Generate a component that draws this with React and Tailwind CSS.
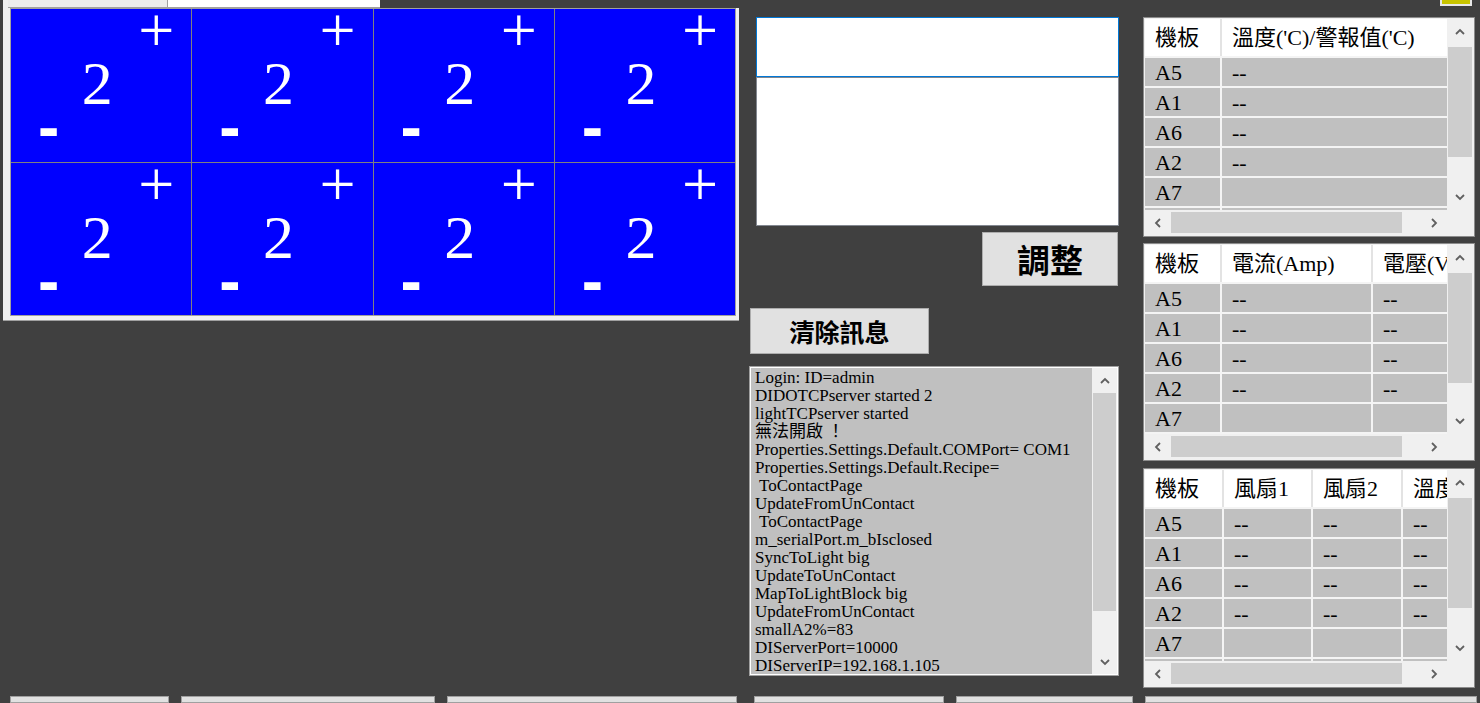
const logLines = [
  'Login: ID=admin',
  'DIDOTCPserver started 2',
  'lightTCPserver started',
  '無法開啟 ！',
  'Properties.Settings.Default.COMPort= COM1',
  'Properties.Settings.Default.Recipe=',
  ' ToContactPage',
  'UpdateFromUnContact',
  ' ToContactPage',
  'm_serialPort.m_bIsclosed',
  'SyncToLight big',
  'UpdateToUnContact',
  'MapToLightBlock big',
  'UpdateFromUnContact',
  'smallA2%=83',
  'DIServerPort=10000',
  'DIServerIP=192.168.1.105',
]

const grids = [
  {
    h: 'h-[220px]',
    cols: [75, 240],
    headers: ['機板', "溫度('C)/警報值('C)"],
    rows: [['A5', '--'], ['A1', '--'], ['A6', '--'], ['A2', '--'], ['A7', ''], ['', '']],
  },
  {
    h: 'h-[218px]',
    cols: [75, 149, 120],
    headers: ['機板', '電流(Amp)', '電壓(V)'],
    rows: [['A5', '--', '--'], ['A1', '--', '--'], ['A6', '--', '--'], ['A2', '--', '--'], ['A7', '', ''], ['', '', '']],
  },
  {
    h: 'h-[220px]',
    cols: [77, 87, 88, 80],
    headers: ['機板', '風扇1', '風扇2', '溫度'],
    rows: [['A5', '--', '--', '--'], ['A1', '--', '--', '--'], ['A6', '--', '--', '--'], ['A2', '--', '--', '--'], ['A7', '', '', ''], ['', '', '', '']],
  },
]

function Arrow({ dir }) {
  const pts = {
    up: '1,6 5,2 9,6',
    down: '1,2 5,6 9,2',
    left: '6,1 2,5 6,9',
    right: '2,1 6,5 2,9',
  }[dir]
  const vert = dir === 'up' || dir === 'down'
  return (
    <svg width={vert ? 10 : 8} height={vert ? 8 : 10} viewBox={vert ? '0 0 10 8' : '0 0 8 10'}>
      <polyline points={pts} fill="none" stroke="#606060" strokeWidth="1.8" />
    </svg>
  )
}

function Cell() {
  return (
    <div className="bg-[#0000ff] text-white flex flex-col font-['Liberation_Serif',serif]">
      <div className="h-[44px] flex justify-end pr-[17px] text-[64px] leading-[44px]">+</div>
      <div className="h-[61px] flex justify-center pr-[8px] text-[62px] leading-[61px]">2</div>
      <div className="mt-[3px] pl-[27px] text-[64px] leading-[20px] font-bold font-['Liberation_Sans',sans-serif]">-</div>
    </div>
  )
}

function DataGrid({ grid }) {
  return (
    <div className={`${grid.h} w-[332px] border border-[#8c8c8c] bg-[#f0f0f0] p-px flex flex-col`}>
      <div className="flex flex-1 min-h-0">
        <div className="w-[302px] overflow-hidden bg-[#f4f4f4] flex flex-col gap-[2px] text-[22px] text-black font-['Liberation_Serif','Noto_Sans_CJK_TC',serif]">
          <div className="flex gap-[2px] bg-[#e3e3e3] shrink-0">
            {grid.headers.map((t, i) => (
              <div
                key={i}
                style={{ width: grid.cols[i] }}
                className="h-[37px] shrink-0 bg-white pl-[10px] flex items-center whitespace-nowrap overflow-hidden"
              >
                {t}
              </div>
            ))}
          </div>
          {grid.rows.map((r, ri) => (
            <div key={ri} className="flex gap-[2px] shrink-0">
              {r.map((t, i) => (
                <div
                  key={i}
                  style={{ width: grid.cols[i] }}
                  className="h-[28px] shrink-0 bg-[#c0c0c0] pl-[10px] flex items-center whitespace-nowrap"
                >
                  {t}
                </div>
              ))}
            </div>
          ))}
        </div>
        <div className="w-[26px] flex flex-col items-center">
          <div className="h-[26px] w-full flex items-center justify-center"><Arrow dir="up" /></div>
          <div className="flex-1 w-full px-[1px]">
            <div className="h-[110px] mt-[2px] bg-[#cdcdcd]" />
          </div>
          <div className="h-[26px] w-full flex items-center justify-center"><Arrow dir="down" /></div>
        </div>
      </div>
      <div className="h-[25px] flex">
        <div className="w-[302px] flex items-center">
          <div className="w-[26px] h-full flex items-center justify-center"><Arrow dir="left" /></div>
          <div className="w-[231px] h-[21px] bg-[#cdcdcd]" />
          <div className="flex-1" />
          <div className="w-[26px] h-full flex items-center justify-center"><Arrow dir="right" /></div>
        </div>
      </div>
    </div>
  )
}

export default function App() {
  return (
    <div className="w-[1480px] h-[703px] bg-[#404040] overflow-hidden flex flex-col">
      <div className="flex h-[696px] shrink-0">
        {/* left: light block panel */}
        <div className="w-[749px] pl-[3px] flex flex-col">
          <div className="flex h-[8px]">
            <div className="w-[5px] bg-[#f0f0f0]" />
            <div className="w-[160px] bg-[#ececec] border-r border-b border-[#a0a0a0]" />
            <div className="w-[212px] bg-white border-b border-[#a0a0a0]" />
          </div>
          <div className="w-[736px] border-l-[7px] border-r-[3px] border-b-[4px] border-[#f0f0f0]">
            <div className="border border-[#a0a0a0]">
              <div className="grid grid-cols-4 grid-rows-2 gap-px bg-[#808080] h-[306px]">
                {Array.from({ length: 8 }).map((_, i) => (
                  <Cell key={i} />
                ))}
              </div>
            </div>
          </div>
          <div className="w-[736px] h-px bg-[#a0a0a0]" />
        </div>

        {/* middle: input, buttons, log */}
        <div className="w-[370px] flex flex-col">
          <div className="ml-[7px] mt-[17px] w-[363px] h-[60px] border border-[#0078d7] bg-white" />
          <div className="ml-[7px] w-[363px] h-[149px] border border-[#828790] bg-white" />
          <button className="mt-[6px] ml-[233px] w-[136px] h-[54px] bg-[#e1e1e1] border border-[#adadad] text-black text-[33px] font-bold font-['Noto_Sans_CJK_TC',sans-serif] leading-none">
            調整
          </button>
          <button className="mt-[22px] ml-[1px] w-[179px] h-[46px] bg-[#e1e1e1] border border-[#adadad] text-black text-[25px] font-bold font-['Noto_Sans_CJK_TC',sans-serif] leading-none">
            清除訊息
          </button>
          <div className="mt-[12px] w-[370px] h-[310px] border border-[#a0a0a0] bg-white p-px flex">
            <div className="flex-1 bg-[#c0c0c0] pl-[4px] pt-[1px] overflow-hidden text-[17px] leading-[18px] text-black font-['Liberation_Serif','Noto_Sans_CJK_TC',serif] whitespace-pre">
              {logLines.map((l, i) => (
                <div key={i}>{l}</div>
              ))}
            </div>
            <div className="w-[25px] bg-[#f0f0f0] flex flex-col">
              <div className="h-[25px] flex items-center justify-center"><Arrow dir="up" /></div>
              <div className="px-[1px]">
                <div className="h-[218px] bg-[#cdcdcd]" />
              </div>
              <div className="flex-1" />
              <div className="h-[25px] flex items-center justify-center"><Arrow dir="down" /></div>
            </div>
          </div>
        </div>

        {/* right: data grids */}
        <div className="w-[332px] ml-[24px] flex flex-col">
          <div className="h-[17px]">
            <div className="ml-[297px] w-[32px] h-[6px] border-x-2 border-b-2 border-[#e8e8e8] bg-[#c8c400]" />
          </div>
          <DataGrid grid={grids[0]} />
          <div className="mt-[6px]">
            <DataGrid grid={grids[1]} />
          </div>
          <div className="mt-[7px]">
            <DataGrid grid={grids[2]} />
          </div>
        </div>
      </div>

      <div className="flex pl-[10px] h-[20px]">
        <div className="w-[159px] bg-[#e1e1e1] border border-[#a0a0a0]" />
        <div className="ml-[12px] w-[254px] bg-[#e1e1e1] border border-[#a0a0a0]" />
        <div className="ml-[12px] w-[290px] bg-[#e1e1e1] border border-[#a0a0a0]" />
        <div className="ml-[17px] w-[190px] bg-[#e1e1e1] border border-[#a0a0a0]" />
        <div className="ml-[12px] w-[177px] bg-[#e1e1e1] border border-[#a0a0a0]" />
        <div className="ml-[12px] w-[332px] bg-[#e1e1e1] border border-[#a0a0a0]" />
      </div>
    </div>
  )
}
